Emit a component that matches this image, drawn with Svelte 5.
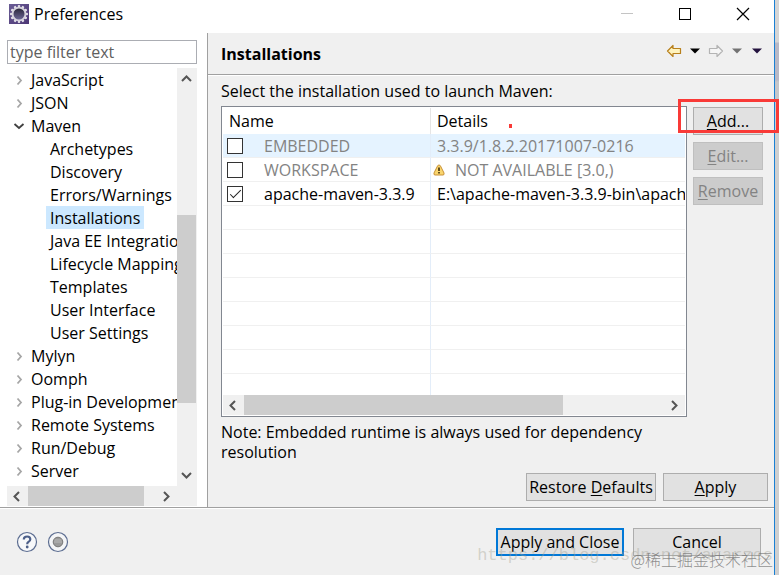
<script lang="ts">
  interface Item {
    label: string;
    level: number;
    open?: boolean;
  }

  const items: Item[] = [
    { label: 'JavaScript', level: 0 },
    { label: 'JSON', level: 0 },
    { label: 'Maven', level: 0, open: true },
    { label: 'Archetypes', level: 1 },
    { label: 'Discovery', level: 1 },
    { label: 'Errors/Warnings', level: 1 },
    { label: 'Installations', level: 1 },
    { label: 'Java EE Integration', level: 1 },
    { label: 'Lifecycle Mappings', level: 1 },
    { label: 'Templates', level: 1 },
    { label: 'User Interface', level: 1 },
    { label: 'User Settings', level: 1 },
    { label: 'Mylyn', level: 0 },
    { label: 'Oomph', level: 0 },
    { label: 'Plug-in Development', level: 0 },
    { label: 'Remote Systems', level: 0 },
    { label: 'Run/Debug', level: 0 },
    { label: 'Server', level: 0 },
  ];

  let selected = $state('Installations');

  let runtimes = $state([
    { name: 'EMBEDDED', details: '3.3.9/1.8.2.20171007-0216', checked: false, muted: true, warn: false },
    { name: 'WORKSPACE', details: 'NOT AVAILABLE [3.0,)', checked: false, muted: true, warn: true },
    { name: 'apache-maven-3.3.9', details: 'E:\\apache-maven-3.3.9-bin\\apache', checked: true, muted: false, warn: false },
  ]);

  const emptyRows = Array.from({ length: 8 });
  const teeth = Array.from({ length: 12 }, (_, i) => i * 30);

  const arrows = {
    up: 'M4 11l4.5-4.5L13 11',
    down: 'M4 6l4.5 4.5L13 6',
    left: 'M10 4L5.5 8.5L10 13',
    right: 'M6 4l4.5 4.5L6 13',
  };
</script>

{#snippet arrow(dir: 'up' | 'down' | 'left' | 'right')}
  <svg class="arrow" width="17" height="17" viewBox="0 0 17 17" aria-hidden="true">
    <path d={arrows[dir]} fill="none" stroke="#555" stroke-width="2" />
  </svg>
{/snippet}

<div class="desktop">
  <div class="dialog">
    <header class="titlebar">
      <svg width="20" height="20" viewBox="0 0 20 20" aria-hidden="true">
        <defs>
          <linearGradient id="plate" x1="0" y1="0" x2="1" y2="1">
            <stop offset="0" stop-color="#6a5d95" />
            <stop offset="1" stop-color="#4c3675" />
          </linearGradient>
          <linearGradient id="core" x1="0" y1="0" x2="0" y2="1">
            <stop offset="0" stop-color="#262334" />
            <stop offset="1" stop-color="#716b9c" />
          </linearGradient>
        </defs>
        <rect width="20" height="20" fill="url(#plate)" />
        {#each teeth as angle}
          <rect x="8.8" y="1" width="2.4" height="4" rx="0.8" fill="#e2dfe8" transform="rotate({angle} 10 10)" />
        {/each}
        <circle cx="10" cy="10" r="6.4" fill="url(#core)" stroke="#d6d3dc" stroke-width="1.8" />
      </svg>
      <span class="title">Preferences</span>
      <button class="caption" aria-label="Minimize">
        <svg width="14" height="14" viewBox="0 0 14 14"><path d="M1 6.5h12" stroke="#c4c4c4" /></svg>
      </button>
      <button class="caption" aria-label="Maximize">
        <svg width="14" height="14" viewBox="0 0 14 14"><rect x="1.5" y="1.5" width="11" height="11" fill="none" stroke="#000" /></svg>
      </button>
      <button class="caption" aria-label="Close">
        <svg width="14" height="14" viewBox="0 0 14 14"><path d="M1 1l12 12M13 1L1 13" stroke="#000" stroke-width="1.2" /></svg>
      </button>
    </header>

    <div class="main">
      <nav class="sidebar">
        <input class="filter" type="text" placeholder="type filter text" aria-label="type filter text" />
        <div class="tree-wrap">
          <ul class="tree">
            {#each items as item}
              <li class:child={item.level === 1}>
                {#if item.level === 0}
                  <svg class="twisty" width="12" height="12" viewBox="0 0 12 12" aria-hidden="true">
                    {#if item.open}
                      <path d="M1.5 4L6 8L10.5 4" fill="none" stroke="#404040" stroke-width="1.8" />
                    {:else}
                      <path d="M4.5 2.5L8 6.5L4.5 10.5" fill="none" stroke="#a6a6a6" stroke-width="1.8" />
                    {/if}
                  </svg>
                {/if}
                <button
                  class="node"
                  class:selected={selected === item.label}
                  onclick={() => (selected = item.label)}>{item.label}</button>
              </li>
            {/each}
          </ul>
          <div class="vscroll">
            {@render arrow('up')}
            <div class="vtrack"><div class="vthumb"></div></div>
            {@render arrow('down')}
          </div>
        </div>
        <div class="hscroll tree-scroll">
          {@render arrow('left')}
          <div class="htrack"><div class="hthumb"></div></div>
          {@render arrow('right')}
        </div>
      </nav>

      <section class="page">
        <div class="page-head">
          <h1>Installations</h1>
          <div class="history">
            <button aria-label="Back">
              <svg width="16" height="14" viewBox="0 0 16 14">
                <path d="M1.5 7L7 1.5V4.5H14.5V9.5H7V12.5Z" fill="#fff3bd" stroke="#b8801c" stroke-width="1.2" stroke-linejoin="round" />
              </svg>
            </button>
            <button aria-label="Back history">
              <svg width="10" height="6" viewBox="0 0 10 6"><path d="M0 0.5h10L5 5.5Z" fill="#000" /></svg>
            </button>
            <button aria-label="Forward" disabled>
              <svg width="16" height="14" viewBox="0 0 16 14">
                <path d="M14.5 7L9 1.5V4.5H1.5V9.5H9V12.5Z" fill="#f6f6f6" stroke="#b4b4b4" stroke-width="1.2" stroke-linejoin="round" />
              </svg>
            </button>
            <button aria-label="Forward history" disabled>
              <svg width="10" height="6" viewBox="0 0 10 6"><path d="M0 0.5h10L5 5.5Z" fill="#737373" /></svg>
            </button>
            <button aria-label="View menu">
              <svg width="10" height="6" viewBox="0 0 10 6"><path d="M0 0.5h10L5 5.5Z" fill="#24133f" /></svg>
            </button>
          </div>
        </div>

        <div class="page-body">
          <p class="intro">Select the installation used to launch Maven:</p>
          <div class="columns">
            <div class="grid-box">
              <table>
                <thead>
                  <tr>
                    <th class="name">Name</th>
                    <th>Details<span class="red-dot"></span></th>
                  </tr>
                </thead>
                <tbody>
                  {#each runtimes as runtime, i}
                    <tr class:hot={i === 0} class:muted={runtime.muted}>
                      <td>
                        <label>
                          <input type="checkbox" bind:checked={runtime.checked} />
                          {runtime.name}
                        </label>
                      </td>
                      <td class:warned={runtime.warn}>
                        {#if runtime.warn}
                          <svg class="warning" width="12" height="12" viewBox="0 0 12 12" aria-hidden="true">
                            <path d="M6 1Q7 1 7.5 2L11 9Q11.5 11 10 11H2Q0.5 11 1 9L4.5 2Q5 1 6 1Z" fill="#f9d56e" stroke="#c99136" />
                            <path d="M6 3.5V7M6 8V9.5" stroke="#3c2c0c" stroke-width="1.6" />
                          </svg>
                        {/if}{runtime.details}
                      </td>
                    </tr>
                  {/each}
                  {#each emptyRows as _}
                    <tr class="empty"><td></td><td></td></tr>
                  {/each}
                </tbody>
              </table>
              <div class="hscroll">
                {@render arrow('left')}
                <div class="htrack"><div class="hthumb"></div></div>
                {@render arrow('right')}
              </div>
            </div>
            <div class="actions">
              <div class="marked">
                <button class="btn"><u>A</u>dd...</button>
                <span class="red-box"></span>
              </div>
              <button class="btn" disabled><u>E</u>dit...</button>
              <button class="btn" disabled><u>R</u>emove</button>
            </div>
          </div>
          <p class="note">Note: Embedded runtime is always used for dependency resolution</p>
        </div>

        <div class="page-buttons">
          <button class="btn restore">Restore <u>D</u>efaults</button>
          <button class="btn apply"><u>A</u>pply</button>
        </div>
      </section>
    </div>

    <footer class="footer">
      <button class="round" aria-label="Help">
        <svg width="22" height="22" viewBox="0 0 22 22">
          <circle cx="11" cy="11" r="9.5" fill="#f7f8fa" stroke="#5c6d91" stroke-width="1.2" />
          <path d="M7.8 8.5Q7.8 5.5 11.2 5.5Q14.3 5.5 14.3 8.2Q14.3 9.8 12.5 10.9Q11.2 11.7 11.2 13.2" fill="none" stroke="#4c5f89" stroke-width="2.2" />
          <circle cx="11.2" cy="16" r="1.4" fill="#4c5f89" />
        </svg>
      </button>
      <button class="round" aria-label="Record">
        <svg width="22" height="22" viewBox="0 0 22 22">
          <circle cx="11" cy="11" r="9.5" fill="#f4f5f7" stroke="#5c6d91" stroke-width="1.2" />
          <circle cx="11" cy="11" r="4.8" fill="#999" stroke="#777" />
          <path d="M7.5 9h7M7 11h8" stroke="#b9b9b9" />
        </svg>
      </button>
      <div class="footer-buttons">
        <button class="btn wide primary">Apply and Close</button>
        <button class="btn wide">Cancel</button>
      </div>
    </footer>
  </div>
  <div class="behind"></div>

  <span class="mark blog">https://blog.csdn.net/ararzes</span>
  <span class="mark juejin">@稀土掘金技术社区</span>
</div>

<style>
  :global(body) {
    margin: 0;
  }

  .desktop {
    position: relative;
    display: flex;
    min-height: 100vh;
    overflow: hidden;
    font-family: "Open Sans", "Noto Sans", "Noto Sans CJK SC", sans-serif;
    font-size: 16px;
    line-height: 20px;
    color: #000;
  }

  .desktop *,
  .desktop *::before {
    box-sizing: border-box;
  }

  .dialog {
    flex: 1;
    min-width: 0;
    display: flex;
    flex-direction: column;
    background: #f0f0f0;
    border-right: 1px solid #1a80d4;
  }

  .behind {
    width: 4px;
    background: linear-gradient(#d5d5d5 0 42px, #b9b9c6 43px 80px, #c6c6c9 82px 110px, #cfcfcf 112px);
  }

  button {
    padding: 0;
    border: 0;
    background: none;
    font: inherit;
    color: inherit;
  }

  svg {
    display: block;
  }

  .titlebar {
    display: flex;
    align-items: center;
    height: 33px;
    padding: 0 2px 5px 9px;
    background: #fff;
  }

  .title {
    flex: 1;
    margin-left: 5px;
  }

  .caption {
    display: flex;
    align-items: center;
    justify-content: center;
    width: 58px;
    height: 28px;
  }

  .main {
    flex: 1;
    display: flex;
  }

  .sidebar {
    flex: none;
    width: 208px;
    padding: 7px 10px 0 7px;
    background: #fff;
    border-right: 1px solid #a0a0a0;
  }

  .filter {
    display: block;
    width: 100%;
    height: 24px;
    padding: 0 2px;
    border: 1px solid #abadb3;
    border-radius: 0;
    background: #fff;
    font: inherit;
  }

  .filter::placeholder {
    color: #606060;
    opacity: 1;
  }

  .tree-wrap {
    display: flex;
    padding-top: 4px;
  }

  .tree {
    flex: 1;
    min-width: 0;
    margin: 0;
    padding: 0 0 4px;
    list-style: none;
    overflow: hidden;
  }

  .tree li {
    display: flex;
    align-items: center;
    height: 23px;
    padding-left: 6px;
  }

  .tree li.child {
    padding-left: 39px;
  }

  .twisty {
    flex: none;
    margin-right: 2px;
  }

  .node {
    flex: none;
    height: 23px;
    padding: 0 4px;
    white-space: nowrap;
  }

  .node.selected {
    background: #cce8ff;
  }

  .vscroll {
    display: flex;
    flex-direction: column;
    align-items: center;
    width: 20px;
    padding: 2px 1px 2px 0;
    background: #f0f0f0;
  }

  .vtrack {
    flex: 1;
    display: flex;
    flex-direction: column;
    width: 100%;
    padding: 128px 0 64px;
  }

  .vthumb {
    flex: 1;
    background: #cdcdcd;
  }

  .arrow {
    flex: none;
  }

  .hscroll {
    display: flex;
    align-items: center;
    height: 20px;
    padding: 0 2px;
    background: #f0f0f0;
  }

  .htrack {
    flex: 1;
    height: 20px;
    margin: 0 2px;
  }

  .hthumb {
    width: 76%;
    height: 100%;
    background: #cdcdcd;
  }

  .tree-scroll {
    padding-right: 22px;
  }

  .tree-scroll .hthumb {
    width: 91%;
  }

  .page {
    flex: 1;
    min-width: 0;
    display: flex;
    flex-direction: column;
  }

  .page-head {
    display: flex;
    align-items: center;
    justify-content: space-between;
    height: 42px;
    padding: 1px 12px 0 13px;
    border-bottom: 1px solid #a0a0a0;
    box-shadow: 0 1px #fff;
  }

  h1 {
    margin: 0;
    font-size: 16px;
    font-weight: 700;
  }

  .history {
    display: flex;
    align-items: center;
    gap: 8px;
    margin-top: -6px;
  }

  .history button:last-child {
    margin-left: 2px;
  }

  .page-body {
    flex: 1;
    padding: 6px 11px 0 13px;
  }

  p {
    margin: 0;
  }

  .intro {
    height: 25px;
  }

  .columns {
    display: flex;
    gap: 6px;
  }

  .grid-box {
    flex: 1;
    min-width: 0;
    padding: 1px;
    border: 1px solid #828790;
    background: #fff;
  }

  table {
    width: 100%;
    table-layout: fixed;
    border-collapse: separate;
    border-spacing: 0;
  }

  th,
  td {
    height: 24px;
    padding: 0 0 0 6px;
    text-align: left;
    font-weight: 400;
    white-space: nowrap;
    overflow: hidden;
    border-bottom: 1px solid #f0f0f0;
  }

  th {
    height: 26px;
    border-bottom: 0;
  }

  th.name {
    width: 208px;
    border-right: 1px solid #e5e5e5;
  }

  td:first-child {
    padding-left: 4px;
    border-right: 1px solid #e3edf9;
  }

  td.warned {
    padding-left: 2px;
  }

  tr.hot td {
    background: #e5f3ff;
  }

  tr.muted {
    color: #838383;
  }

  tr.empty:last-child td {
    height: 21px;
    border-bottom: 0;
  }

  label {
    display: flex;
    align-items: center;
    gap: 21px;
  }

  input[type='checkbox'] {
    appearance: none;
    position: relative;
    width: 16px;
    height: 16px;
    margin: 0;
    border: 1px solid #333;
    background: #fff;
  }

  input[type='checkbox']:checked::before {
    content: '';
    position: absolute;
    left: 2px;
    top: 3px;
    width: 11px;
    height: 5px;
    border-left: 1px solid #222;
    border-bottom: 1px solid #222;
    transform: rotate(-45deg);
  }

  .warning {
    display: inline-block;
    margin-right: 10px;
  }

  .red-dot {
    display: inline-block;
    width: 3px;
    height: 4px;
    margin-left: 21px;
    background: #f93a37;
    vertical-align: -1px;
  }

  .actions {
    display: flex;
    flex-direction: column;
    gap: 7px;
    width: 70px;
    padding-top: 1px;
  }

  .btn {
    height: 28px;
    border: 1px solid #adadad;
    background: #e1e1e1;
    white-space: nowrap;
  }

  .btn:disabled {
    border-color: #bfbfbf;
    background: #ccc;
    color: #838383;
  }

  .btn u {
    text-underline-offset: 2px;
    text-decoration-thickness: 1px;
  }

  .marked {
    position: relative;
    display: flex;
  }

  .marked .btn {
    flex: 1;
  }

  .red-box {
    position: absolute;
    top: -8px;
    left: -15px;
    right: -16px;
    height: 34px;
    border: 3px solid #f93a37;
    pointer-events: none;
  }

  .note {
    margin-top: 5px;
    padding-right: 76px;
  }

  .page-buttons {
    display: flex;
    justify-content: flex-end;
    gap: 7px;
    padding: 10px 6px 6px;
  }

  .restore {
    width: 130px;
  }

  .apply {
    width: 105px;
  }

  .footer {
    display: flex;
    align-items: center;
    gap: 9px;
    height: 68px;
    padding: 0 13px 0 16px;
    border-top: 1px solid #a0a0a0;
    box-shadow: inset 0 1px #fff;
  }

  .footer-buttons {
    flex: 1;
    display: flex;
    justify-content: flex-end;
    gap: 9px;
  }

  .wide {
    width: 128px;
  }

  .primary {
    border: 2px solid #0078d7;
  }

  .mark {
    position: absolute;
    white-space: nowrap;
    pointer-events: none;
  }

  .blog {
    right: 6px;
    bottom: 9px;
    font-family: "Liberation Mono", monospace;
    font-size: 17px;
    color: rgba(160, 160, 145, 0.4);
  }

  .juejin {
    right: 6px;
    bottom: 6px;
    font-family: "Noto Sans CJK SC", sans-serif;
    font-size: 16px;
    font-weight: 300;
    color: rgba(110, 110, 110, 0.75);
  }
</style>
